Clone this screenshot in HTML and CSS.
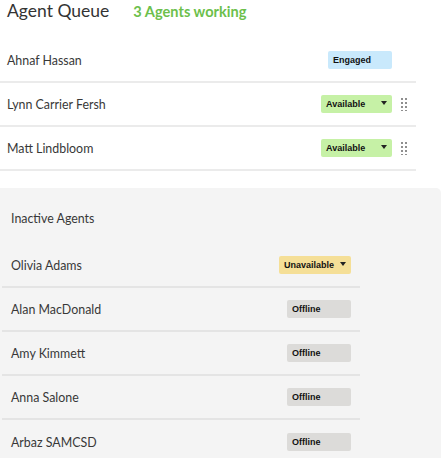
FILE: index.html
```html
<!DOCTYPE html>
<html>
<head>
<meta charset="utf-8">
<link rel="stylesheet" href="styles.css">
</head>
<body>
<div class="header">
  <h1 class="title">Agent Queue</h1>
  <span class="working">3 Agents working</span>
</div>
<div class="queue">
  <div class="row">
    <span class="name">Ahnaf Hassan</span>
    <div class="status">
      <span class="badge engaged">Engaged</span>
      <span class="handle hidden"></span>
    </div>
  </div>
  <div class="row">
    <span class="name">Lynn Carrier Fersh</span>
    <div class="status">
      <span class="badge available">Available<i class="caret"></i></span>
      <span class="handle"></span>
    </div>
  </div>
  <div class="row">
    <span class="name">Matt Lindbloom</span>
    <div class="status">
      <span class="badge available">Available<i class="caret"></i></span>
      <span class="handle"></span>
    </div>
  </div>
</div>
<div class="panel">
  <div class="panel-title">Inactive Agents</div>
  <div class="inactive">
    <div class="irow">
      <span class="name">Olivia Adams</span>
      <span class="badge unavailable">Unavailable<i class="caret"></i></span>
    </div>
    <div class="irow">
      <span class="name">Alan MacDonald</span>
      <span class="badge offline">Offline</span>
    </div>
    <div class="irow">
      <span class="name">Amy Kimmett</span>
      <span class="badge offline">Offline</span>
    </div>
    <div class="irow">
      <span class="name">Anna Salone</span>
      <span class="badge offline">Offline</span>
    </div>
    <div class="irow">
      <span class="name">Arbaz SAMCSD</span>
      <span class="badge offline">Offline</span>
    </div>
  </div>
</div>
</body>
</html>
```
FILE: styles.css
```css
html, body {
  margin: 0;
  padding: 0;
  background: #fff;
}
body {
  font-family: Lato, "Open Sans", Arial, sans-serif;
  color: #3c3c3c;
  width: 441px;
  height: 464px;
  overflow: hidden;
}
.header {
  height: 39px;
  display: flex;
  align-items: baseline;
  padding-left: 7px;
  box-sizing: border-box;
}
.title {
  margin: 0;
  font-weight: 400;
  font-size: 17.5px;
  line-height: 21.5px;
  color: #333;
}
.working {
  margin-left: 24px;
  font-weight: 700;
  font-size: 14.6px;
  line-height: 18px;
  color: #6cbf4c;
}
.queue {
  width: 416px;
}
.row {
  height: 44px;
  box-sizing: border-box;
  border-bottom: 2px solid #ebebeb;
  display: flex;
  align-items: center;
  justify-content: space-between;
  padding: 0 9px 0 7px;
}
.name {
  font-size: 12.4px;
  color: #383838;
}
.status {
  display: flex;
  align-items: center;
}
.badge {
  height: 18px;
  box-sizing: border-box;
  border-radius: 2px;
  display: flex;
  align-items: center;
  justify-content: space-between;
  padding: 0 5px;
  font-family: "Liberation Sans", Arial, sans-serif;
  font-weight: 700;
  font-size: 9px;
  color: #111;
}
.engaged {
  width: 64px;
  background: #c9e9fc;
}
.available {
  width: 71px;
  background: #c6f1a6;
}
.unavailable {
  width: 72px;
  background: #f5df97;
}
.offline {
  width: 64px;
  background: #dcdbd9;
}
.caret {
  width: 0;
  height: 0;
  border-left: 3.5px solid transparent;
  border-right: 3.5px solid transparent;
  border-top: 4px solid #222;
  margin-top: -2px;
}
.handle {
  margin-left: 9px;
  width: 6px;
  height: 14px;
  background-image: radial-gradient(circle, #8f8f8f 0.9px, transparent 1.1px);
  background-size: 4px 4px;
  background-position: -1px 0;
}
.handle.hidden {
  visibility: hidden;
}
.panel {
  margin-top: 17px;
  height: 270px;
  overflow: hidden;
  background: #f4f4f4;
  border-top-right-radius: 5px;
}
.panel-title {
  height: 56px;
  box-sizing: border-box;
  padding: 24px 0 0 11px;
  font-size: 12.4px;
  line-height: 14px;
  color: #383838;
}
.inactive {
  width: 358px;
  margin-left: 2px;
}
.irow {
  height: 44px;
  box-sizing: border-box;
  border-bottom: 2px solid #e4e4e4;
  display: flex;
  align-items: center;
  justify-content: space-between;
  padding: 0 9px 0 9px;
}
.irow:last-child {
  border-bottom: none;
}
```
